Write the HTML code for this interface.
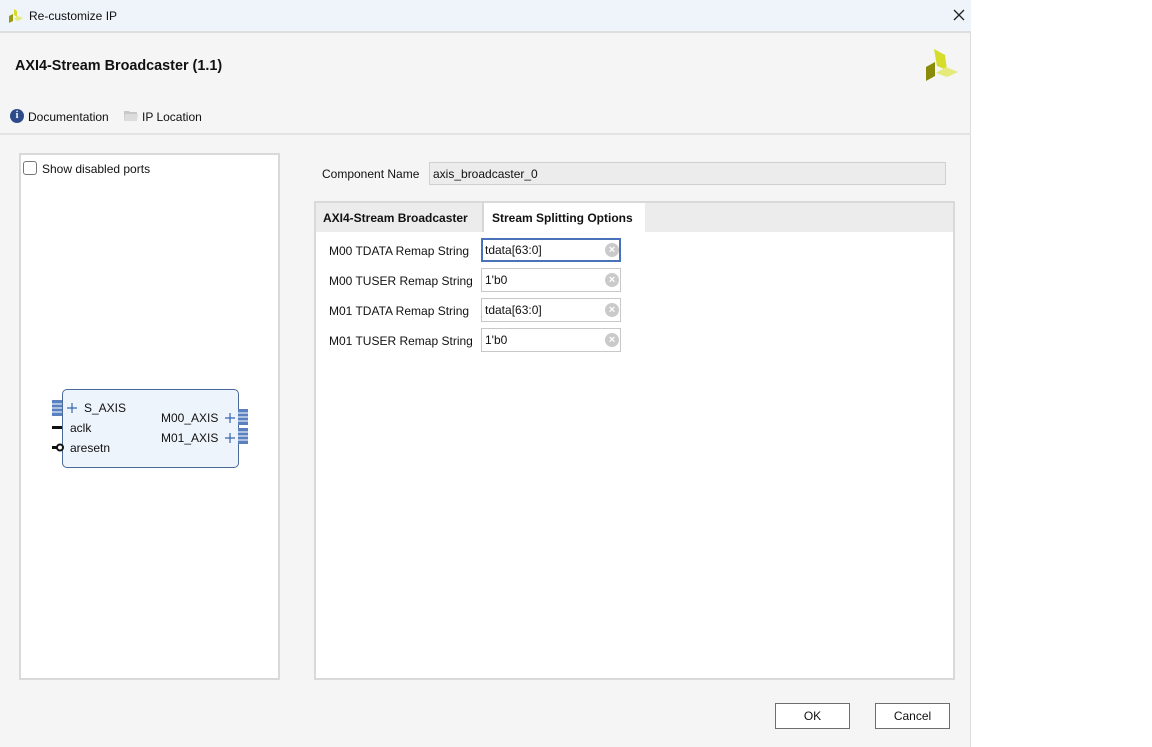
<!DOCTYPE html>
<html><head><style>
*{box-sizing:border-box;margin:0;padding:0}
body{width:1152px;height:747px;background:#fff;font-family:"Liberation Sans",sans-serif;font-size:12px;color:#111;position:relative;overflow:hidden}
.dlg{position:absolute;left:0;top:0;width:971px;height:747px;background:#f5f5f5;border-right:1px solid #ddd}
.tb{position:absolute;left:0;top:0;width:971px;height:33px;background:#eef4f9;border-bottom:2px solid #dedede}
.abs{position:absolute}
.inp{position:absolute;left:481px;width:140px;height:24px;background:#fff;border:1px solid #c8c8c8;padding:4px 3px;font-size:12px}
.inp .x{position:absolute;right:1px;top:4px;width:14px;height:14px;border-radius:50%;background:#cacaca;color:#fff;font-size:11px;line-height:14px;text-align:center;font-weight:bold}
.lbl{position:absolute;left:329px;font-size:12px}
.btn{position:absolute;top:703px;width:75px;height:26px;border:1px solid #6e6e6e;background:#fff;text-align:center;line-height:24px;font-size:12px}
</style></head><body>
<div class="dlg">
<div class="tb">
<svg class="abs" style="left:7px;top:8px" width="16" height="15" viewBox="0 0 16 15"><polygon points="2,8 6,6 6,13 2,15" fill="#9a9a10"/><polygon points="7,1 10,3 10,9 7,7" fill="#d6dc2a"/><polygon points="7,11 11,8 16,10 11,13" fill="#e6ea7a"/></svg>
<div class="abs" style="left:29px;top:9px;font-size:12px">Re-customize IP</div>
<svg class="abs" style="left:953px;top:9px" width="12" height="12" viewBox="0 0 12 12"><path d="M1 1L11 11M11 1L1 11" stroke="#222" stroke-width="1.3"/></svg>
</div>
<div class="abs" style="left:15px;top:58px;font-size:14.4px;font-weight:bold">AXI4-Stream Broadcaster (1.1)</div>
<svg class="abs" style="left:0;top:0" width="971" height="100" viewBox="0 0 971 100"><polygon points="934,49 945,55 947,70 937,66" fill="#d6dc2a"/><polygon points="926,67 935,62 935,76 926,81" fill="#8b8b0a"/><polygon points="936,73 946,67 958,72 947,77" fill="#e6ea7a"/></svg>
<div class="abs" style="left:10px;top:109px;width:14px;height:14px;border-radius:50%;background:#2f4c8a;color:#fff;font-size:10px;font-weight:bold;text-align:center;line-height:14px;font-family:'Liberation Serif',serif">i</div>
<div class="abs" style="left:28px;top:110px">Documentation</div>
<svg class="abs" style="left:124px;top:110px" width="14" height="11" viewBox="0 0 14 11"><path d="M0 1h5l1 1h7v9H0z" fill="#c8c8c8"/><path d="M1 4h13l-1 7H0z" fill="#dcdcdc"/></svg>
<div class="abs" style="left:142px;top:110px">IP Location</div>
<div class="abs" style="left:0;top:133px;width:971px;height:2px;background:#e2e2e2"></div>

<div class="abs" style="left:19px;top:153px;width:261px;height:527px;border:2px solid #d9d9d9;background:#fff"></div>
<div class="abs" style="left:23px;top:161px;width:14px;height:14px;border:1px solid #777;border-radius:3px;background:#fff"></div>
<div class="abs" style="left:42px;top:162px">Show disabled ports</div>

<div class="abs" style="left:62px;top:389px;width:177px;height:79px;border:1px solid #4a6a9a;border-radius:5px;background:#eef4fb"></div>
<svg class="abs" style="left:50px;top:398px" width="200" height="60" viewBox="0 0 200 60">
<g fill="#3a64b0"><rect x="2" y="2" width="10" height="16" fill="#5a80c0"/><rect x="188" y="11" width="10" height="16" fill="#5a80c0"/><rect x="188" y="30" width="10" height="16" fill="#5a80c0"/></g>
<g stroke="#fff" stroke-width="1"><path d="M2 6h10M2 10h10M2 14h10M188 15h10M188 19h10M188 23h10M188 34h10M188 38h10M188 42h10"/></g>
<path d="M17 10h10M22 5v10M175 20h10M180 15v10M175 40h10M180 35v10" stroke="#3a64b0" stroke-width="1.2"/>
<rect x="2" y="28" width="10" height="3" fill="#111"/>
<rect x="2" y="48" width="6" height="3" fill="#111"/><circle cx="10" cy="49.5" r="3" fill="#fff" stroke="#111" stroke-width="2"/>
</svg>
<div class="abs" style="left:84px;top:401px">S_AXIS</div>
<div class="abs" style="left:70px;top:421px">aclk</div>
<div class="abs" style="left:70px;top:441px">aresetn</div>
<div class="abs" style="left:161px;top:411px">M00_AXIS</div>
<div class="abs" style="left:161px;top:431px">M01_AXIS</div>

<div class="abs" style="left:322px;top:167px">Component Name</div>
<div class="abs" style="left:429px;top:162px;width:517px;height:23px;background:#ececec;border:1px solid #cfcfcf;padding:4px 3px">axis_broadcaster_0</div>

<div class="abs" style="left:314px;top:201px;width:641px;height:479px;border:2px solid #d9d9d9;background:#fff"></div>
<div class="abs" style="left:316px;top:203px;width:637px;height:29px;background:#ececec"></div>
<div class="abs" style="left:323px;top:211px;font-weight:bold">AXI4-Stream Broadcaster</div>
<div class="abs" style="left:482px;top:203px;width:163px;height:29px;background:#fff;border-left:2px solid #d6d6d6"></div>
<div class="abs" style="left:492px;top:211px;font-weight:bold">Stream Splitting Options</div>

<div class="lbl" style="top:244px">M00 TDATA Remap String</div>
<div class="inp" style="top:238px;border:2px solid #4a72b8;padding:3px 2px">tdata[63:0]<span class="x" style="right:0;top:3px">×</span></div>
<div class="lbl" style="top:274px">M00 TUSER Remap String</div>
<div class="inp" style="top:268px">1'b0<span class="x">×</span></div>
<div class="lbl" style="top:304px">M01 TDATA Remap String</div>
<div class="inp" style="top:298px">tdata[63:0]<span class="x">×</span></div>
<div class="lbl" style="top:334px">M01 TUSER Remap String</div>
<div class="inp" style="top:328px">1'b0<span class="x">×</span></div>

<div class="btn" style="left:775px">OK</div>
<div class="btn" style="left:875px">Cancel</div>
</div>
</body></html>
